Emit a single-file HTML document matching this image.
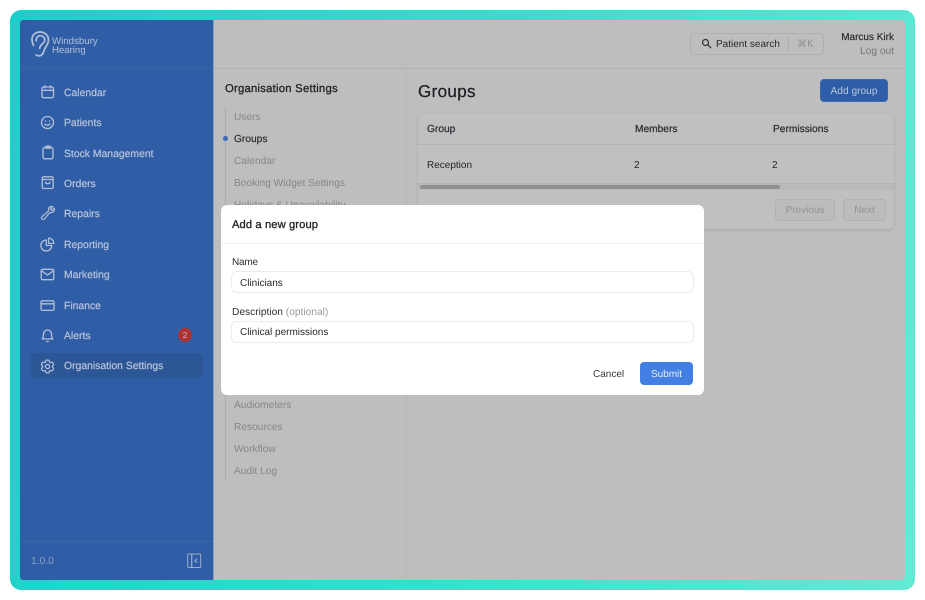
<!DOCTYPE html>
<html lang="en"><head><meta charset="utf-8"><title>Add a new group</title>
<style>
*{box-sizing:border-box}
html,body{margin:0;padding:0;width:925px;height:600px;overflow:hidden;background:#fff;font-family:"Liberation Sans",sans-serif;text-rendering:geometricPrecision}
div,span,a{position:absolute;white-space:nowrap}
#frame{left:10px;top:10px;width:905px;height:580px;border-radius:11px;background:linear-gradient(100deg,#1bcfca 0%,#3adccd 50%,#62ead5 100%)}
#inner{left:20px;top:20px;width:885px;height:560px;background:#bebebe;border-radius:3px;overflow:hidden}
#side{left:20px;top:20px;width:194px;height:560px;background:#305ea6;border-radius:3px 0 0 3px}
.n{left:64px;font-size:10.4px;line-height:14px;color:#b6c3da;-webkit-text-stroke:.2px #b6c3da}
svg{position:absolute;fill:none;stroke:#b3c0d8;stroke-width:1.3;stroke-linecap:round;stroke-linejoin:round}
.s{left:234px;font-size:10.2px;line-height:14px;color:#85878c}
.h{font-size:10.2px;line-height:14px;color:#2c2f36;-webkit-text-stroke:.25px #2c2f36}
.c{font-size:10px;line-height:14px;color:#222}
.in{left:231px;width:463px;background:#fff;border:1px solid #ececec;border-radius:6px}
</style></head><body>
<div id="frame"></div>
<div id="inner"></div>
<div id="side"></div>

<div style="left:20px;top:68px;width:194px;height:1px;background:#3a66aa"></div>
<div style="left:214px;top:68px;width:691px;height:1px;background:#b3b3b3"></div>
<div style="left:20px;top:541px;width:194px;height:1px;background:#3a66aa"></div>
<div style="left:213px;top:20px;width:1px;height:560px;background:#8f9cb5"></div>
<div style="left:406px;top:69px;width:1px;height:511px;background:#b6b6b6"></div>

<!-- logo -->
<svg style="left:31px;top:31px;stroke-width:1.7" width="19" height="26" viewBox="0 0 19 26">
<path d="M2.6 14.5C1.5 12.2 1 10.2 1 8.4C1 4 4.4 1 9 1C13.8 1 17.5 4.4 17.5 9C17.5 12.4 15.6 14.6 14.2 17C12.8 19.4 12.8 21.4 11.4 23.2C10 25 6.6 25.4 5 23.9"/>
<path d="M5.2 9.8C5 6.8 6.8 4.7 9.3 4.7C11.8 4.7 13.8 6.6 13.8 9C13.8 11 12 12.3 10.8 13.3C9.6 14.3 9 15.6 8.6 17.4"/>
</svg>
<div style="left:52px;top:35px;font-size:9.7px;line-height:14px;color:#b3c0d8">Windsbury</div>
<div style="left:52px;top:43.5px;font-size:9.6px;line-height:14px;color:#b3c0d8">Hearing</div>

<!-- nav -->
<div style="left:31px;top:353px;width:172px;height:25px;background:#2d5697;border-radius:4px"></div>

<svg style="left:40px;top:84px" width="15" height="15" viewBox="0 0 15 15"><rect x="2" y="3" width="11.5" height="10.7" rx="1.5"/><path d="M2 6.3H13.5M5 1.8V4M10.5 1.8V4"/></svg>
<div class="n" style="top:87px">Calendar</div>
<svg style="left:40px;top:115px" width="15" height="15" viewBox="0 0 15 15"><circle cx="7.5" cy="7.5" r="6"/><path d="M5 9C6 10.5 9 10.5 10 9M5.5 6H5.6M9.5 6H9.6"/></svg>
<div class="n" style="top:117px">Patients</div>
<svg style="left:40px;top:145px" width="15" height="15" viewBox="0 0 15 15"><rect x="3" y="2.5" width="10" height="11.3" rx="1.5"/><rect x="5.6" y="1.2" width="4.8" height="2" rx=".7"/></svg>
<div class="n" style="top:148px">Stock Management</div>
<svg style="left:40px;top:175px" width="15" height="15" viewBox="0 0 15 15"><rect x="2.2" y="1.8" width="11" height="11.7" rx="1.5"/><path d="M2.2 4.5H13.2M5.4 7.2C6.2 9.2 9.2 9.2 10 7.2"/></svg>
<div class="n" style="top:178px">Orders</div>
<svg style="left:39.5px;top:205px;stroke-width:1.8" width="16" height="16" viewBox="0 0 24 24"><path d="M21.75 6.75a4.5 4.5 0 0 1-4.884 4.484c-1.076-.091-2.264.071-2.95.904l-7.152 8.684a2.548 2.548 0 1 1-3.586-3.586l8.684-7.152c.833-.686.995-1.874.904-2.95a4.5 4.5 0 0 1 6.336-4.486l-3.276 3.276a3.004 3.004 0 0 0 2.25 2.25l3.276-3.276c.291.627.398 1.3.398 1.852Z"/></svg>
<div class="n" style="top:208px">Repairs</div>
<svg style="left:39px;top:236px;stroke-width:1.75" width="17" height="17" viewBox="0 0 24 24"><path d="M10.5 6a7.5 7.5 0 1 0 7.5 7.5h-7.5V6Z" transform="translate(-.5 -.5) scale(1.03)"/><path d="M13.5 10.5H21A7.5 7.5 0 0 0 13.5 3v7.5Z"/></svg>
<div class="n" style="top:239px">Reporting</div>
<svg style="left:40px;top:267px" width="15" height="15" viewBox="0 0 15 15"><rect x="1.2" y="2.3" width="12.6" height="10.4" rx="1.5"/><path d="M1.5 3.8L7.5 8L13.5 3.8"/></svg>
<div class="n" style="top:269px">Marketing</div>
<svg style="left:40px;top:297.5px" width="15" height="15" viewBox="0 0 15 15"><rect x="1" y="2.8" width="13" height="9.6" rx="1.5"/><path d="M1 5.8H14"/></svg>
<div class="n" style="top:300px">Finance</div>
<svg style="left:40px;top:328px" width="15" height="15" viewBox="0 0 15 15"><path d="M2.2 11C3.2 10 3.5 9 3.5 6A4 4 0 0 1 11.5 6C11.5 9 11.8 10 12.8 11Z"/><path d="M6.7 13.5H8.3"/></svg>
<div class="n" style="top:330px">Alerts</div>
<div style="left:178px;top:328px;width:14px;height:14px;border-radius:7px;background:#ad3333;color:#d9b8bb;font-size:8.5px;line-height:14px;text-align:center">2</div>
<svg style="left:39px;top:358px;stroke-width:1.7" width="17" height="17" viewBox="0 0 24 24"><path d="M9.594 3.94c.09-.542.56-.94 1.11-.94h2.593c.55 0 1.02.398 1.11.94l.213 1.281c.063.374.313.686.645.87.074.04.147.083.22.127.325.196.72.257 1.075.124l1.217-.456a1.125 1.125 0 0 1 1.37.49l1.296 2.247a1.125 1.125 0 0 1-.26 1.431l-1.003.827c-.293.241-.438.613-.43.992a7.723 7.723 0 0 1 0 .255c-.008.378.137.75.43.991l1.004.827c.424.35.534.955.26 1.43l-1.298 2.247a1.125 1.125 0 0 1-1.369.491l-1.217-.456c-.355-.133-.75-.072-1.076.124a6.47 6.47 0 0 1-.22.128c-.331.183-.581.495-.644.869l-.213 1.281c-.09.543-.56.94-1.11.94h-2.594c-.55 0-1.019-.398-1.11-.94l-.213-1.281c-.062-.374-.312-.686-.644-.87a6.52 6.52 0 0 1-.22-.127c-.325-.196-.72-.257-1.076-.124l-1.217.456a1.125 1.125 0 0 1-1.369-.49l-1.297-2.247a1.125 1.125 0 0 1 .26-1.431l1.004-.827c.292-.24.437-.613.43-.991a6.932 6.932 0 0 1 0-.255c.007-.38-.138-.751-.43-.992l-1.004-.827a1.125 1.125 0 0 1-.26-1.43l1.297-2.247a1.125 1.125 0 0 1 1.37-.491l1.216.456c.356.133.751.072 1.076-.124.072-.044.146-.086.22-.128.332-.183.582-.495.644-.869l.214-1.28Z"/><circle cx="12" cy="12" r="3"/></svg>
<div class="n" style="top:360px">Organisation Settings</div>

<div style="left:31px;top:555px;font-size:10.3px;line-height:14px;color:#8a9fc6">1.0.0</div>
<svg style="left:187px;top:553px;stroke:#9cadcb;stroke-width:1" width="15" height="16" viewBox="0 0 15 16"><rect x=".7" y="1" width="13" height="13.5" rx="1"/><path d="M4.7 1V14.5M9.8 6L8 7.8L9.8 9.5" stroke-width="1.2"/></svg>

<!-- top right -->
<div style="left:690px;top:33px;width:134px;height:22px;border:1px solid #b0b0b0;border-radius:4px"></div>
<svg style="left:701px;top:38px;stroke:#2f3135;stroke-width:1.2" width="11" height="11" viewBox="0 0 11 11"><circle cx="4.5" cy="4.5" r="3"/><path d="M6.8 6.8L9.8 9.8"/></svg>
<div style="left:716px;top:38px;font-size:10px;line-height:14px;color:#25272b">Patient search</div>
<div style="left:788px;top:37px;width:1px;height:14px;background:#b0b0b0"></div>
<div style="left:797px;top:38px;font-size:10px;line-height:14px;color:#929292;font-family:'DejaVu Sans',sans-serif">⌘K</div>
<div style="right:31px;top:31px;font-size:10px;line-height:14px;color:#25272b;-webkit-text-stroke:.15px #25272b">Marcus Kirk</div>
<div style="right:31px;top:45px;font-size:10.2px;line-height:14px;color:#777">Log out</div>

<!-- settings nav -->
<div style="left:225px;top:82px;font-size:11.3px;line-height:14px;color:#1f2126;letter-spacing:.23px;-webkit-text-stroke:.3px #1f2126">Organisation Settings</div>
<div style="left:225px;top:107px;width:1px;height:373px;background:#aaa"></div>
<div style="left:223px;top:136px;width:5px;height:5px;border-radius:3px;background:#3c68b2"></div>
<div class="s" style="top:111px">Users</div>
<div class="s" style="top:133px;color:#26282d;-webkit-text-stroke:.15px #26282d">Groups</div>
<div class="s" style="top:155px">Calendar</div>
<div class="s" style="top:177px">Booking Widget Settings</div>
<div class="s" style="top:199px">Holidays &amp; Unavailability</div>
<div class="s" style="top:399px">Audiometers</div>
<div class="s" style="top:421px">Resources</div>
<div class="s" style="top:443px">Workflow</div>
<div class="s" style="top:465px">Audit Log</div>

<!-- groups -->
<div style="left:418px;top:81px;font-size:17px;line-height:21px;color:#1d1f24;letter-spacing:.35px;-webkit-text-stroke:.25px #1d1f24">Groups</div>
<div style="left:820px;top:79px;width:68px;height:23px;background:#2f5ea8;border:1px solid #3c69b0;border-radius:4px;color:#b9c6dd;font-size:10.2px;line-height:23px;text-align:center">Add group</div>

<div style="left:418px;top:113px;width:476px;height:116px;background:#c0c0c0;border-radius:5px;box-shadow:0 1px 3px rgba(0,0,0,.12)"></div>
<div style="left:418px;top:144px;width:476px;height:1px;background:#b3b3b3"></div>
<div style="left:418px;top:183px;width:476px;height:7px;background:#b9b9b9;border-top:1px solid #b2b2b2"></div>
<div style="left:420px;top:185px;width:360px;height:3.5px;background:#8f8f8f;border-radius:2px"></div>
<div class="h" style="left:427px;top:123px">Group</div>
<div class="h" style="left:635px;top:123px">Members</div>
<div class="h" style="left:773px;top:123px">Permissions</div>
<div class="c" style="left:427px;top:159px">Reception</div>
<div class="c" style="left:634px;top:159px">2</div>
<div class="c" style="left:772px;top:159px">2</div>
<div style="left:775px;top:199px;width:60px;height:22px;border:1px solid #b2b2b2;background:#bcbcbc;border-radius:4px;color:#929292;font-size:10px;line-height:21px;text-align:center">Previous</div>
<div style="left:843px;top:199px;width:43px;height:22px;border:1px solid #b2b2b2;background:#bcbcbc;border-radius:4px;color:#929292;font-size:10px;line-height:21px;text-align:center">Next</div>

<!-- modal -->
<div style="left:221px;top:205px;width:483px;height:190px;background:#fff;border-radius:6px"></div>
<div style="left:221px;top:243px;width:483px;height:1px;background:#f0f0f0"></div>
<div style="left:232px;top:218px;font-size:11.2px;line-height:14px;color:#1f2126;letter-spacing:.1px;-webkit-text-stroke:.3px #1f2126">Add a new group</div>
<div style="left:232px;top:256px;font-size:10px;line-height:14px;color:#2e3036;letter-spacing:-.2px">Name</div>
<div class="in" style="top:271px;height:22px"></div>
<div style="left:240px;top:277px;font-size:10px;line-height:14px;color:#25272b">Clinicians</div>
<div style="left:232px;top:306px;font-size:10.2px;line-height:14px;color:#2e3036">Description <span style="position:static;color:#999">(optional)</span></div>
<div class="in" style="top:321px;height:22px"></div>
<div style="left:240px;top:326px;font-size:10px;line-height:14px;color:#25272b">Clinical permissions</div>
<div style="left:593px;top:368px;font-size:10px;line-height:14px;color:#33353a">Cancel</div>
<div style="left:640px;top:362px;width:53px;height:23px;background:#437fe3;border-radius:4px;color:#e8effb;font-size:10px;line-height:26px;text-align:center">Submit</div>
</body></html>
